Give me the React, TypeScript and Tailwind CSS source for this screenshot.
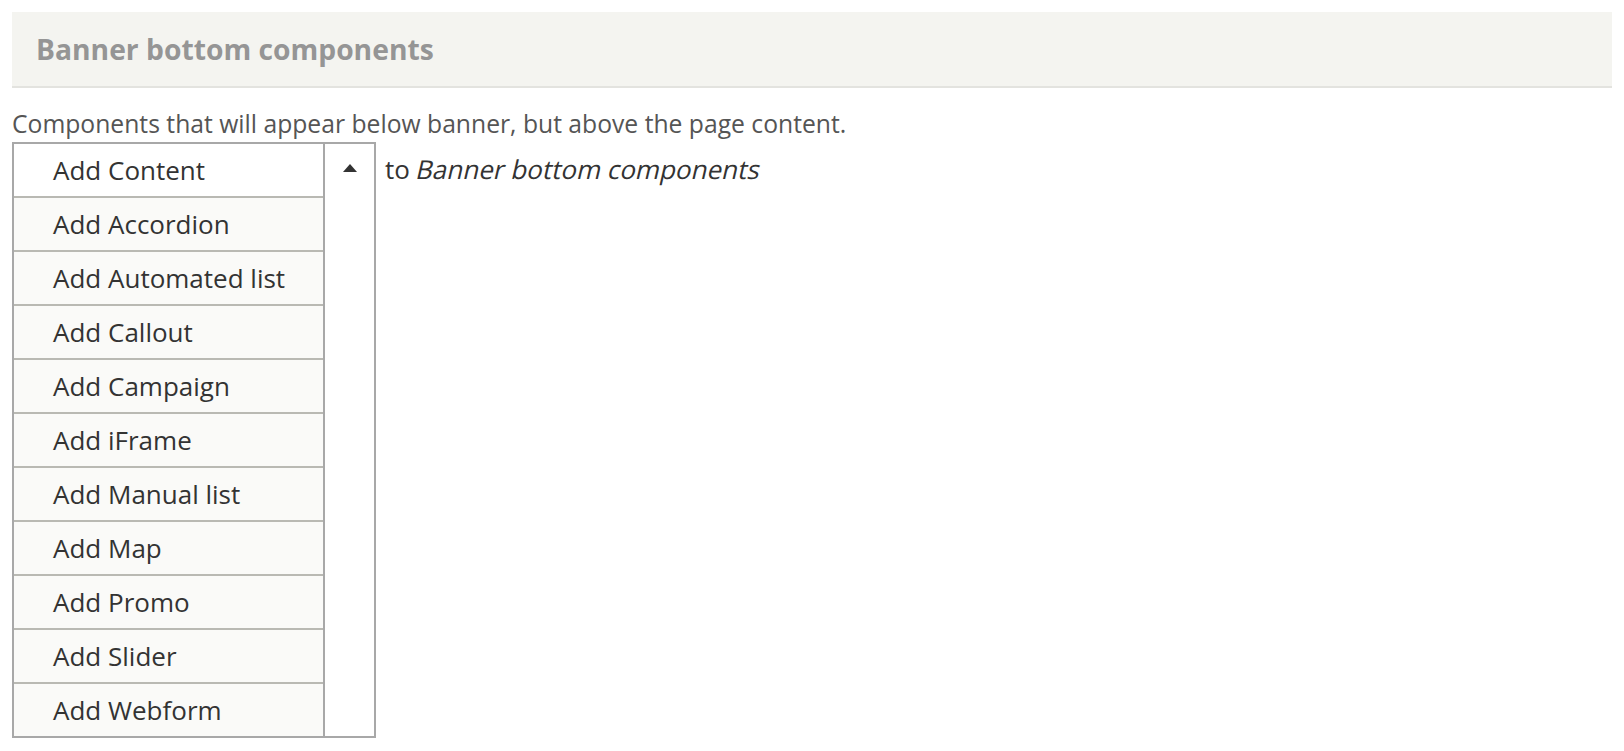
import React from 'react';

const items = [
  'Add Accordion',
  'Add Automated list',
  'Add Callout',
  'Add Campaign',
  'Add iFrame',
  'Add Manual list',
  'Add Map',
  'Add Promo',
  'Add Slider',
  'Add Webform',
];

export default function App() {
  return (
    <div className="min-h-screen bg-white px-3 pt-3 font-['Open_Sans',sans-serif]">
      {/* Section title */}
      <div className="flex h-[76px] items-center border-b-2 border-[#e3e3df] bg-[#f4f4f0] pl-6">
        <h2 className="text-[28.25px] font-bold leading-none text-[#959595]">Banner bottom components</h2>
      </div>

      <p className="mt-[18px] text-[24.7px] leading-[36px] text-[#555]">
        Components that will appear below banner, but above the page content.
      </p>

      <div className="flex items-start">
        <div className="flex border-2 border-[#a8a8a8]">
          <ul className="w-[311px] border-r-2 border-[#a8a8a8]">
            <li className="flex h-[52px] items-center bg-white pl-[39px] text-[26px] text-[#333]">Add Content</li>
            {items.map((label) => (
              <li
                key={label}
                className="flex h-[54px] items-center border-t-2 border-[#b9b9b3] bg-[#fafaf8] pl-[39px] text-[26px] text-[#333]"
              >
                {label}
              </li>
            ))}
          </ul>
          <div className="flex w-[49px] justify-center bg-white pt-[20px]">
            <svg width="14" height="8" viewBox="0 0 14 8">
              <path d="M7 0 L14 8 L0 8 Z" fill="#333" />
            </svg>
          </div>
        </div>
        <div className="flex h-[54px] items-center pl-[9px] text-[26px] text-[#333]">
          <span>
            to <span className="inline-block -skew-x-[13deg] whitespace-pre">Banner bottom components</span>
          </span>
        </div>
      </div>
    </div>
  );
}
